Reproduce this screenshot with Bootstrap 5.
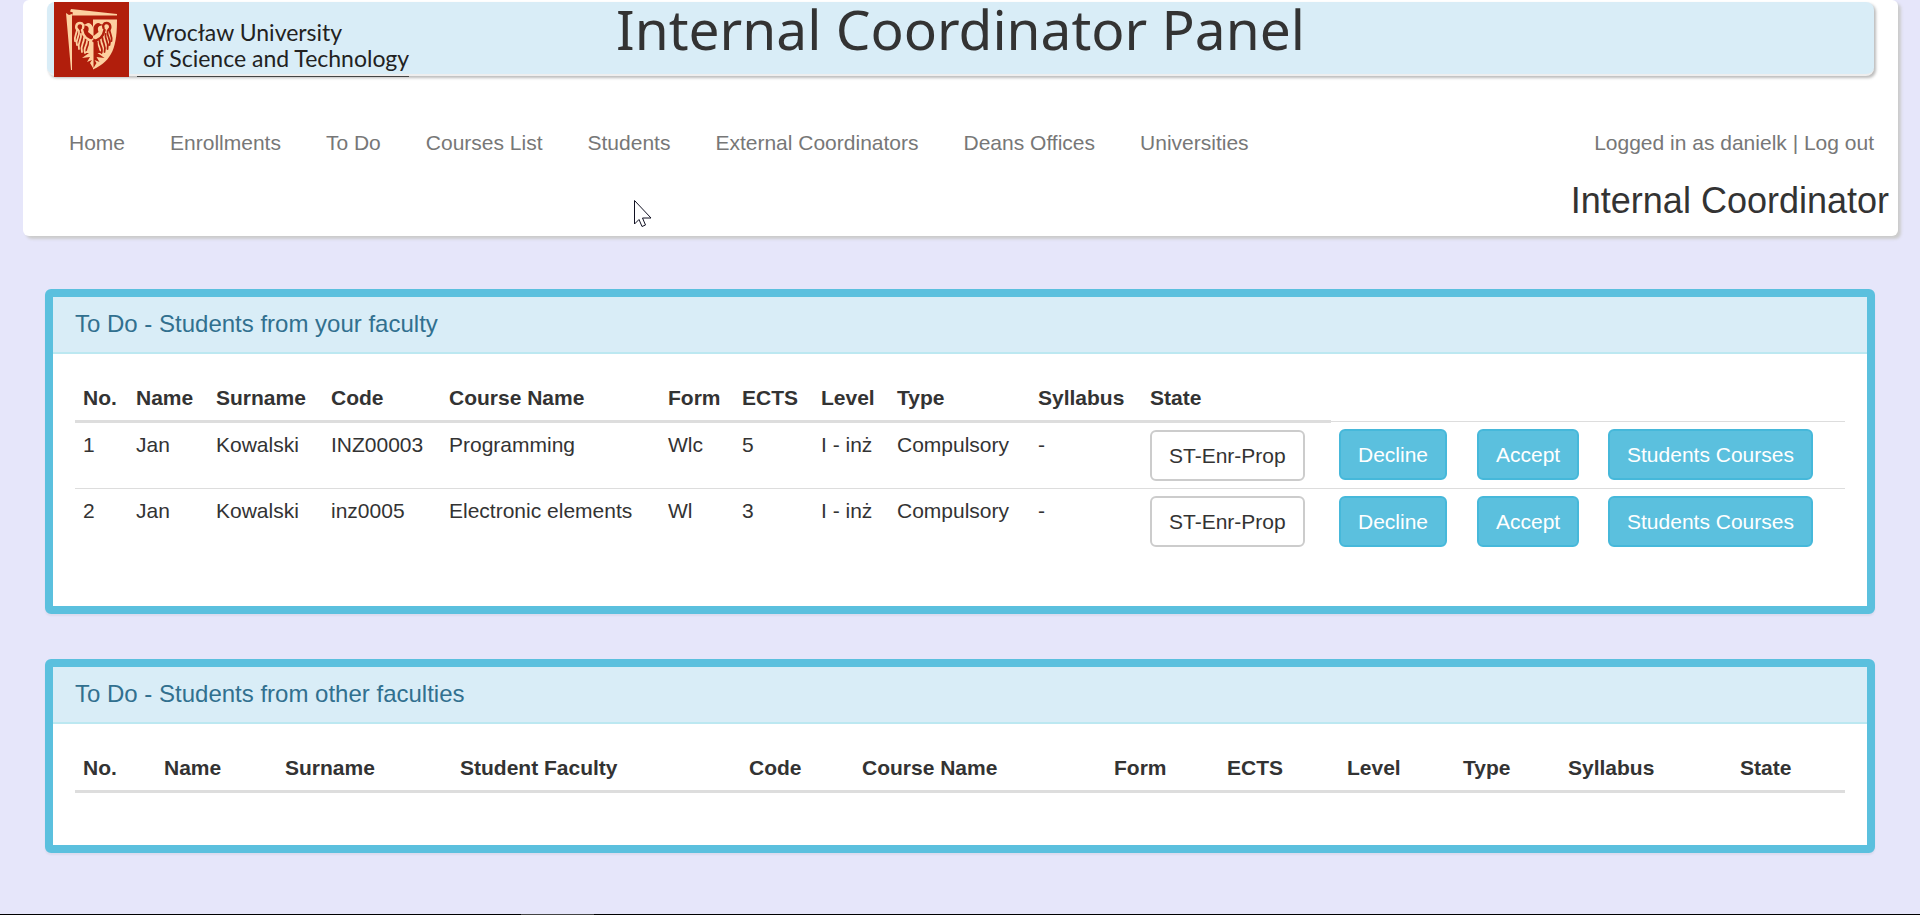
<!DOCTYPE html>
<html lang="en">
<head>
<meta charset="utf-8">
<meta name="viewport" content="width=device-width, initial-scale=1">
<title>Internal Coordinator Panel</title>
<link href="https://cdn.jsdelivr.net/npm/bootstrap@5.3.0/dist/css/bootstrap.min.css" rel="stylesheet">
<style>
  body { background: #e6e6fa; color: #333; font-family: "Liberation Sans", Arial, sans-serif; font-size: 21px; line-height: 30px; }
  .page-head { margin: 0 22px 0 23px; padding: 2px 0 15px 24px; background: #fff; border-radius: 6px; box-shadow: 3px 3px 3px #ccc; }
  .title-bar { height: 74px; margin-right: 24px; background: #d9edf7; border-bottom: 2px solid #eee; border-radius: 8px; box-shadow: 2px 2px 3px #bbb; }
  .title-side { flex: 1 1 0; padding-left: 7px; }
  .brand { color: #222; text-decoration: none; font-family: Lato, sans-serif; font-size: 23px; line-height: 26px; gap: 8px; }
  .brand svg { flex: none; width: 75px; height: 75px; }
  .brand-name { padding: 17px 0 0 6px; border-bottom: 1px solid #444; height: 75px; white-space: nowrap; }
  .page-title { font-family: "Noto Sans", sans-serif; font-size: 55px; line-height: 54px; font-weight: 400; white-space: nowrap; }
  .main-nav { margin: 52px 24px 0 22px; }
  .nav-items { gap: 15px 45px; }
  .main-nav, .main-nav a { color: #777; text-decoration: none; }
  .role { font-size: 36px; line-height: 40px; font-weight: 400; margin: 23px 9px 0 0; }
  .todo-list { padding: 53px 45px 0; }
  .todo { margin-bottom: 45px; border: 8px solid #5bc0de; border-radius: 6px; background: #fff; box-shadow: 0 2px 2px rgba(0,0,0,.05); }
  .todo-head { padding: 13px 22px 15px; background: #d9edf7; border-bottom: 2px solid #bce8f1; color: #31708f; }
  .todo-head h2 { font-size: 24px; line-height: 27px; font-weight: 400; margin: 0; }
  .todo-body { padding: 22px 22px 52px; }
  .todo-table { width: 100%; table-layout: fixed; border-collapse: collapse; white-space: nowrap; }
  .todo-table th { padding: 7px 8px; border-bottom: 3px solid #ddd; }
  .todo-table td { padding: 7px 8px; border-top: 1px solid #ddd; vertical-align: top; }
  .todo .btn { display: block; padding: 8px 17px; border-width: 2px; border-radius: 6px; font-size: 21px; line-height: 31px; }
  .btn-state { background: #fff; border-color: #ccc; color: #333; }
  .btn-act { background: #5bc0de; border-color: #46b8da; color: #fff; }
  .pointer { position: absolute; left: 633px; top: 199px; width: 20px; height: 30px; }
  .taskbar-edge { height: 1px; background: #000; padding-left: 521px; }
  .taskbar-edge span { display: block; width: 73px; height: 1px; background: #444; }
</style>
</head>
<body>
<header class="page-head">
  <div class="title-bar d-flex">
    <div class="title-side">
      <a class="brand d-inline-flex" href="#">
        <svg viewBox="0 0 75 75" aria-hidden="true">
          <defs>
            <g id="half-eagle">
              <path d="M39 25c-2-4-5-5-7-3l-3 1 4 1c2 1 2 3 1 6l5 4zM39 36v30l-3-5 2-3-5 2 3-5-8 1 7-5-5 0 5-4v-7z" fill="currentColor"/>
              <g fill="none" stroke="currentColor" stroke-linecap="round">
                <path d="M24 28c-3-2-2-7 2-7 3 0 4 3 3 5M28 28c1 6 5 10 11 11" stroke-width="2.500"/>
                <path d="M23 27c0 5-3 7-2 12M25 29c1 6-4 8-2 14M27 32c1 6-4 8-2 15M30 36c0 6-4 7-2 14M33 39c0 5-4 7-2 12M36 40c0 5-2 6-2 9" stroke-width="1.800"/>
              </g>
            </g>
          </defs>
          <rect width="75" height="75" fill="#b11e0c"/>
          <g fill="#fdd0a0">
            <path d="M17 7l46 5v1.500H18l1-3-3-1z"/>
            <path d="M12 11l3 2 3-1v56h-1z"/>
            <path d="M39 17.500H63c0 26-4 41-24 50z"/>
          </g>
          <use href="#half-eagle" color="#fdd0a0"/>
          <use href="#half-eagle" color="#b11e0c" transform="matrix(-1 0 0 1 78.500 0)"/>
        </svg>
        <span class="brand-name">Wrocław University<br>of Science and Technology</span>
      </a>
    </div>
    <h1 class="page-title m-0">Internal Coordinator Panel</h1>
    <div class="title-side"></div>
  </div>
  <nav class="main-nav d-flex justify-content-between">
    <div class="nav-items d-flex flex-wrap">
      <a href="#">Home</a><a href="#">Enrollments</a><a href="#">To Do</a><a href="#">Courses List</a><a href="#">Students</a><a href="#">External Coordinators</a><a href="#">Deans Offices</a><a href="#">Universities</a>
    </div>
    <div><a href="#">Logged in as danielk</a> | <a href="#">Log out</a></div>
  </nav>
  <h2 class="role text-end">Internal Coordinator</h2>
</header>
<svg class="pointer" viewBox="0 0 20 30" aria-hidden="true"><path d="M1.500 1.500v23.500l4.500-4.500 3 7 3.500-1.500-3-7h8.500z" fill="#fff" stroke="#112" stroke-width="1"/></svg>
<main class="todo-list">
  <section class="todo">
    <div class="todo-head"><h2>To Do - Students from your faculty</h2></div>
    <div class="todo-body">
      <table class="todo-table">
        <colgroup><col style="width:53px"><col style="width:80px"><col style="width:115px"><col style="width:118px"><col style="width:219px"><col style="width:74px"><col style="width:79px"><col style="width:76px"><col style="width:141px"><col style="width:112px"><col style="width:189px"><col style="width:138px"><col style="width:131px"><col style="width:245px"></colgroup>
        <thead><tr><th>No.</th><th>Name</th><th>Surname</th><th>Code</th><th>Course Name</th><th>Form</th><th>ECTS</th><th>Level</th><th>Type</th><th>Syllabus</th><th>State</th></tr></thead>
        <tbody>
          <tr><td>1</td><td>Jan</td><td>Kowalski</td><td>INZ00003</td><td>Programming</td><td>Wlc</td><td>5</td><td>I - inż</td><td>Compulsory</td><td>-</td><td><button type="button" class="btn btn-state">ST-Enr-Prop</button></td><td><button type="button" class="btn btn-act">Decline</button></td><td><button type="button" class="btn btn-act">Accept</button></td><td><button type="button" class="btn btn-act">Students Courses</button></td></tr>
          <tr><td>2</td><td>Jan</td><td>Kowalski</td><td>inz0005</td><td>Electronic elements</td><td>Wl</td><td>3</td><td>I - inż</td><td>Compulsory</td><td>-</td><td><button type="button" class="btn btn-state">ST-Enr-Prop</button></td><td><button type="button" class="btn btn-act">Decline</button></td><td><button type="button" class="btn btn-act">Accept</button></td><td><button type="button" class="btn btn-act">Students Courses</button></td></tr>
        </tbody>
      </table>
    </div>
  </section>
  <section class="todo">
    <div class="todo-head"><h2>To Do - Students from other faculties</h2></div>
    <div class="todo-body">
      <table class="todo-table">
        <colgroup><col style="width:81px"><col style="width:121px"><col style="width:175px"><col style="width:289px"><col style="width:113px"><col style="width:252px"><col style="width:113px"><col style="width:120px"><col style="width:116px"><col style="width:105px"><col style="width:172px"><col style="width:113px"></colgroup>
        <thead><tr><th>No.</th><th>Name</th><th>Surname</th><th>Student Faculty</th><th>Code</th><th>Course Name</th><th>Form</th><th>ECTS</th><th>Level</th><th>Type</th><th>Syllabus</th><th>State</th></tr></thead>
      </table>
    </div>
  </section>
</main>
<div class="taskbar-edge fixed-bottom"><span></span></div>
<script src="https://cdn.jsdelivr.net/npm/bootstrap@5.3.0/dist/js/bootstrap.bundle.min.js"></script>
</body>
</html>
